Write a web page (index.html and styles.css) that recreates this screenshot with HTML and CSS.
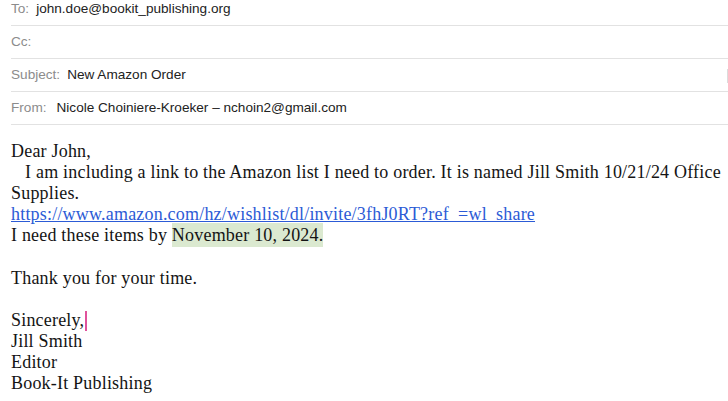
FILE: index.html
```html
<!DOCTYPE html>
<html>
<head>
<meta charset="utf-8">
<link rel="stylesheet" href="styles.css">
</head>
<body>
<div class="compose">
  <div class="headers">
    <div class="row"><span class="label">To:</span><span class="value">john.doe@bookit_publishing.org</span></div>
    <div class="row"><span class="label">Cc:</span></div>
    <div class="row"><span class="label">Subject:</span><span class="value">New Amazon Order</span><span class="edge"></span></div>
    <div class="row"><span class="label from">From:</span><span class="value">Nicole Choiniere-Kroeker – nchoin2@gmail.com</span></div>
  </div>
  <div class="message">
    <div>Dear John,</div>
    <div>&nbsp;&nbsp;&nbsp;I am including a link to the Amazon list I need to order. It is named Jill Smith 10/21/24 Office Supplies.</div>
    <div><a href="#">https://www.amazon.com/hz/wishlist/dl/invite/3fhJ0RT?ref_=wl_share</a></div>
    <div>I need these items by <span class="hl">November 10, 2024.</span></div>
    <div><br></div>
    <div>Thank you for your time.</div>
    <div><br></div>
    <div>Sincerely,<span class="caret"></span></div>
    <div>Jill Smith</div>
    <div>Editor</div>
    <div>Book-It Publishing</div>
  </div>
</div>
</body>
</html>
```
FILE: styles.css
```css
html, body {
  margin: 0;
  padding: 0;
  background: #ffffff;
  overflow: hidden;
}
.compose {
  width: 728px;
  height: 401px;
  overflow: hidden;
}
.headers {
  margin-top: -7px;
  padding-left: 11px;
  font-family: "Liberation Sans", Arial, sans-serif;
  font-size: 13.6px;
}
.row {
  height: 30px;
  padding-bottom: 2px;
  border-bottom: 1px solid #e2e2e2;
  display: flex;
  align-items: center;
  position: relative;
}
.label {
  color: #8c8c8c;
  margin-right: 7px;
}
.label.from {
  margin-right: 10px;
}
.value {
  color: #222222;
}
.edge {
  position: absolute;
  right: 0;
  top: 10px;
  width: 1px;
  height: 14px;
  background: #dcdcdc;
}
.message {
  padding: 16px 0 0 11px;
  font-family: "Liberation Serif", "Times New Roman", serif;
  font-size: 18px;
  letter-spacing: 0.2px;
  line-height: 21.1px;
  color: #141414;
}
.message a {
  color: #2c5bd6;
  text-decoration: underline;
}
.hl {
  background: #dbe9d0;
  padding: 2px 0 2px;
}
.caret {
  display: inline-block;
  width: 2px;
  height: 20px;
  background: #e0529c;
  vertical-align: -5px;
  margin-left: 1px;
}
```
